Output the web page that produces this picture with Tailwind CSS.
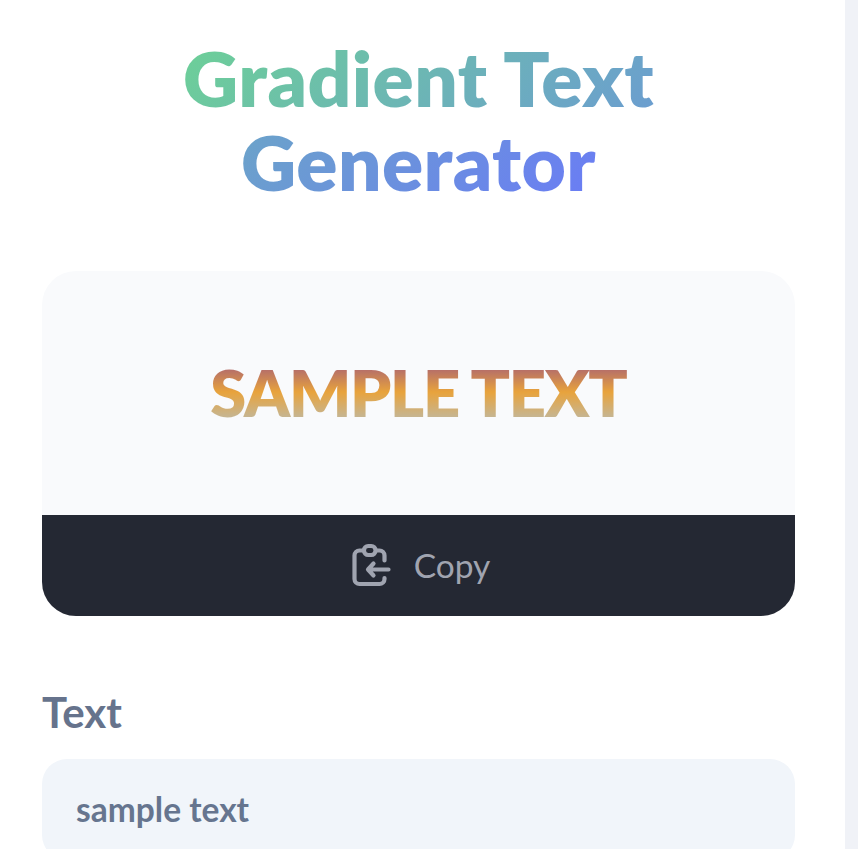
<!DOCTYPE html>
<html lang="en">
<head>
<meta charset="utf-8">
<title>Gradient Text Generator</title>
<script src="https://cdn.jsdelivr.net/npm/@tailwindcss/browser@4"></script>
</head>
<body class="bg-white font-['Lato',sans-serif]">
<div class="h-[849px] overflow-hidden pr-[6px]">
<main class="h-full overflow-hidden border-r-[13px] border-[#f0f2f7] pl-[42px] pr-[50px] pt-[35px]">
  <h1 class="text-center text-[76.500px] font-extrabold leading-[84px] tracking-[0.400px] whitespace-nowrap"><span class="bg-linear-[135deg,#6dd196,#6a7bf6] bg-clip-text text-transparent">Gradient Text<br>Generator</span></h1>
  <section class="mt-[68px] overflow-hidden rounded-[34px] bg-[#f9fafc]">
    <div class="flex h-[244px] items-center justify-center pb-[2px]">
      <span class="bg-linear-[180deg,#914989_0%,#e8a33c_50%,#b3bfc1_100%] bg-clip-text text-[65px] font-extrabold uppercase leading-[78px] tracking-[-1.300px] text-transparent">sample text</span>
    </div>
    <button class="flex h-[101px] w-full items-center justify-center gap-[22px] bg-[#242833] pb-[2px] pl-[5px] text-[#a0a4b0]">
      <svg class="h-[44px] w-[40px]" viewBox="352 543 40 44" fill="none" stroke="currentColor" stroke-width="4.200" stroke-linecap="round" stroke-linejoin="round">
        <path d="M363 550.500h-3.500a5 5 0 0 0-5 5v23.500a5 5 0 0 0 5 5h20a5 5 0 0 0 5-5v-1M376 550.500h3.500a5 5 0 0 1 5 5v5"/>
        <rect x="364" y="546" width="11.500" height="9" rx="4.200"/>
        <path d="M388.500 569.500h-20M373.500 563.500l-5.500 6 5.500 6"/>
      </svg>
      <span class="text-[33.500px] leading-[50px]">Copy</span>
    </button>
  </section>
  <label class="mt-[66px] block text-[42px] font-bold leading-[60px] text-[#66738c]">Text</label>
  <div class="mt-[17px] flex h-[101px] items-center rounded-[25px] bg-[#f1f5fa] px-[34px] pb-[1px] text-[33.500px] font-bold text-[#66758f]">sample text</div>
</main>
</div>
</body>
</html>
